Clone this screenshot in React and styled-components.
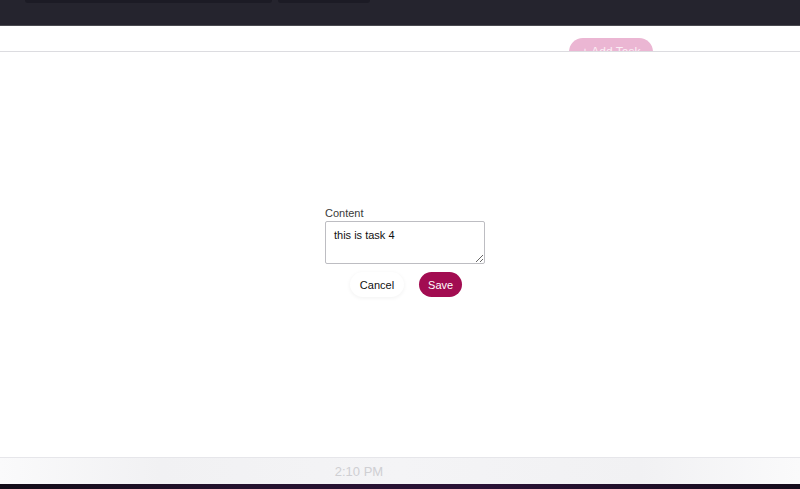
import React, { useState } from "react";
import styled, { createGlobalStyle } from "styled-components";

const GlobalStyle = createGlobalStyle`
  html, body { margin: 0; padding: 0; background: #fff; }
  body { font-family: "Liberation Sans", Arial, sans-serif; }
  * { box-sizing: border-box; }
`;

const Page = styled.div`
  width: 800px;
  height: 489px;
  display: flex;
  flex-direction: column;
  overflow: hidden;
`;

const TopBar = styled.div`
  height: 26px;
  background: #25242e;
  border-bottom: 1px solid #4a4a50;
  display: flex;
  align-items: flex-start;
  gap: 6px;
  padding-left: 25px;
`;

const Tab = styled.div`
  width: ${p => p.$w}px;
  height: 3px;
  background: #1c1b25;
  border-radius: 0 0 3px 3px;
`;

const Header = styled.div`
  height: 26px;
  background: #fff;
  border-bottom: 1px solid #dcdce0;
  display: flex;
  justify-content: flex-end;
  padding-right: 147px;
  overflow: hidden;
`;

const AddTask = styled.button`
  margin-top: 12px;
  width: 84px;
  height: 28px;
  border: none;
  border-radius: 14px;
  background: #ebb6d3;
  color: #fbeef5;
  font-family: inherit;
  font-size: 12px;
  padding: 0;
  line-height: 20px;
  align-self: flex-start;
`;

const Body = styled.div`
  flex: 1;
  background: #fff;
  display: flex;
  justify-content: center;
  align-items: flex-start;
  padding: 154px 0 0 10px;
`;

const Form = styled.form`
  width: 160px;
  display: flex;
  flex-direction: column;
`;

const Label = styled.label`
  font-size: 11px;
  color: #3a3a3a;
  line-height: 14px;
  margin-bottom: 1px;
`;

const TextArea = styled.textarea`
  width: 160px;
  height: 43px;
  border: 1px solid #bdbdc2;
  border-radius: 2px;
  padding: 7px 8px;
  font-family: inherit;
  font-size: 11px;
  color: #111;
  resize: both;
  outline: none;
`;

const Actions = styled.div`
  display: flex;
  justify-content: center;
  gap: 15px;
  margin-top: 8px;
  padding-left: 2px;
`;

const Button = styled.button`
  height: 25px;
  padding: 0 ${p => (p.$primary ? 9 : 10)}px;
  border: none;
  border-radius: 13px;
  font-family: inherit;
  font-size: 11px;
  background: ${p => (p.$primary ? "#a20c51" : "#fff")};
  color: ${p => (p.$primary ? "#fff" : "#111")};
  box-shadow: ${p => (p.$primary ? "none" : "0 1px 4px rgba(0,0,0,0.06)")};
  cursor: pointer;
`;

const Footer = styled.div`
  height: 27px;
  border-top: 1px solid #e6e6ea;
  background: linear-gradient(90deg, #fafafb 0%, #f1f1f3 20%, #f4f4f6 50%, #f1f1f3 80%, #fafafb 100%);
  display: flex;
  align-items: center;
  justify-content: center;
  padding: 0 82px 0 0;
`;

const Time = styled.span`
  font-family: "Liberation Sans Narrow", "Liberation Sans", sans-serif;
  font-size: 13px;
  color: #cfcfd3;
`;

const Dock = styled.div`
  height: 5px;
  background: linear-gradient(90deg, #120c18 0%, #24122e 30%, #2a1236 60%, #150c1c 100%);
`;

export default function App() {
  const [content, setContent] = useState("this is task 4");

  return (
    <Page>
      <GlobalStyle />
      <TopBar>
        <Tab $w={247} />
        <Tab $w={92} />
      </TopBar>
      <Header>
        <AddTask type="button">+ Add Task</AddTask>
      </Header>
      <Body>
        <Form onSubmit={e => e.preventDefault()}>
          <Label htmlFor="content">Content</Label>
          <TextArea id="content" value={content} onChange={e => setContent(e.target.value)} />
          <Actions>
            <Button type="button">Cancel</Button>
            <Button type="submit" $primary>Save</Button>
          </Actions>
        </Form>
      </Body>
      <Footer>
        <Time>2:10 PM</Time>
      </Footer>
      <Dock />
    </Page>
  );
}
